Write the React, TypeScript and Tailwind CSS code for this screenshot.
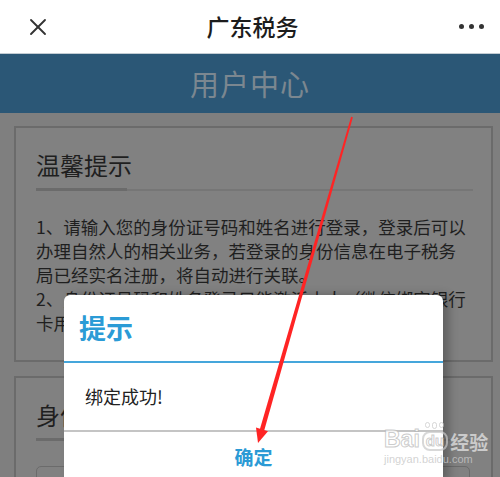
import { X } from "lucide-react";

export default function App() {
  return (
    <div className="relative w-[500px] h-[477px] overflow-hidden bg-[#7f7f7f] font-['Noto_Sans_CJK_SC',sans-serif]">
      {/* top bar */}
      <div className="h-[54px] bg-white border-b border-[#c3ccd3] flex items-center justify-between pl-[24px] pr-[16px]">
        <X className="w-[28px] h-[28px] text-[#333]" strokeWidth={1.6} />
        <div className="text-[23px] font-medium text-[#1c1c1c] leading-none -ml-[6px]">广东税务</div>
        <div className="flex gap-[5px] items-center">
          <span className="w-[5px] h-[5px] rounded-full bg-[#333]" />
          <span className="w-[5px] h-[5px] rounded-full bg-[#333]" />
          <span className="w-[5px] h-[5px] rounded-full bg-[#333]" />
        </div>
      </div>

      {/* blue header */}
      <div className="h-[59px] bg-[#2b5776] flex items-center justify-center">
        <span className="text-[29px] text-[#7b8790] tracking-[1px]">用户中心</span>
      </div>

      {/* content */}
      <div className="pt-[13px] pl-[14px] pr-[7px] flex flex-col gap-[14px]">
        <div className="border-2 border-[#6b6b6b] bg-[#818181] pl-[20px] pr-[18px] pt-[21px] pb-[25px]">
          <div className="text-[24px] leading-[32px] text-[#1f1f1f]">温馨提示</div>
          <div className="mt-[7px] flex items-end">
            <div className="w-[91px] h-[3px] bg-[#6b6b6b]" />
            <div className="flex-1 h-[2px] bg-[#767676]" />
          </div>
          <div className="mt-[24px] text-[17.5px] leading-[24px] text-[#1f1f1f] whitespace-nowrap">
            1、请输入您的身份证号码和姓名进行登录，登录后可以
            <br />
            办理自然人的相关业务，若登录的身份信息在电子税务
            <br />
            局已经实名注册，将自动进行关联。
            <br />
            2、身份证号码和姓名登录只能激活本人（微信绑定银行
            <br />
            卡用户可通过银行卡号登录）。
          </div>
        </div>

        <div className="border-2 border-[#6b6b6b] bg-[#818181] pl-[20px] pr-[18px] pt-[21px] pb-[25px]">
          <div className="text-[24px] leading-[32px] text-[#1f1f1f]">身份认证</div>
          <div className="mt-[7px] flex items-end">
            <div className="w-[91px] h-[3px] bg-[#6b6b6b]" />
            <div className="flex-1 h-[2px] bg-[#767676]" />
          </div>
          <div className="mt-[25px] h-[40px] border border-[#6b6b6b] rounded-[5px] mr-[3px]" />
        </div>
      </div>

      {/* dialog */}
      <div className="absolute left-[64px] top-[295px] w-[379px] bg-white rounded-t-[6px] shadow-[6px_0_10px_rgba(0,0,0,0.25)]">
        <div className="h-[66px] flex items-center pl-[15px]">
          <span className="text-[27px] font-bold text-[#2b9bd6]">提示</span>
        </div>
        <div className="h-[2px] bg-[#45a6db]" />
        <div className="h-[67px] flex items-center pl-[21px]">
          <span className="text-[18px] text-[#222]">绑定成功!</span>
        </div>
        <div className="h-[2px] bg-[#c4c4c4]" />
        <div className="h-[50px] flex items-center justify-center">
          <span className="text-[19px] font-bold text-[#2b9ad5]">确定</span>
        </div>
      </div>

      {/* red arrow */}
      <svg className="absolute left-0 top-0 pointer-events-none" width="500" height="477">
        <polygon points="352.9,117.3 351.1,116.7 259.8,429.4 264.2,430.6" fill="#ff2424" />
        <polygon points="258,443 256,427.6 268,431.2" fill="#ff2424" />
      </svg>

      {/* watermark */}
      <div className="absolute left-[384px] top-[428px] flex flex-col items-start pointer-events-none">
        <div className="relative flex items-end">
          <span className="text-[23px] font-bold leading-none text-white/80 [-webkit-text-stroke:1px_rgba(160,160,160,0.55)] font-['Liberation_Sans',sans-serif]">Bai</span>
          <span className="relative ml-[2px] px-[2px] rounded-[8px] border-2 border-[rgba(200,200,200,0.7)] text-[15px] font-bold leading-[16px] text-white/80 [-webkit-text-stroke:1px_rgba(160,160,160,0.55)] font-['Liberation_Sans',sans-serif]">
            du
            <span className="absolute -top-[11px] left-[1px] flex gap-[2px]">
              <span className="w-[5px] h-[6px] rounded-full border border-[rgba(200,200,200,0.7)]" />
              <span className="w-[5px] h-[7px] rounded-full border border-[rgba(200,200,200,0.7)]" />
              <span className="w-[5px] h-[6px] rounded-full border border-[rgba(200,200,200,0.7)]" />
            </span>
          </span>
          <span className="ml-[2px] text-[19px] font-bold leading-none text-white/60">经验</span>
        </div>
        <span className="mt-[3px] text-[11px] leading-none text-[rgba(200,200,200,0.8)] font-['Liberation_Sans',sans-serif]">jingyan.baidu.com</span>
      </div>
    </div>
  );
}
